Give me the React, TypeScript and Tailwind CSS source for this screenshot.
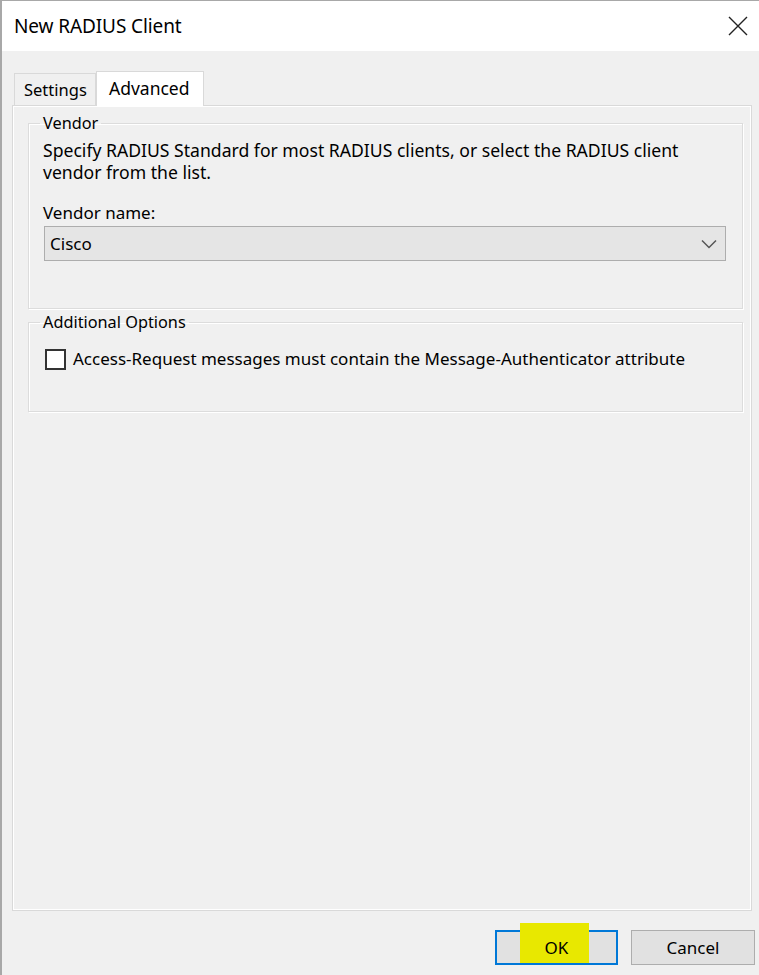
const font = { fontFamily: '"Noto Sans", "Open Sans", sans-serif' };

function GroupBox({ label, className, children }: { label: string; className?: string; children: React.ReactNode }) {
  return (
    <fieldset className="border border-[#dcdcdc] shadow-[inset_1px_1px_0_#ffffff,1px_1px_0_#ffffff]">
      <legend className="ml-[11px] px-[3px] text-[16.3px] leading-[20px] text-black">{label}</legend>
      <div className={className}>{children}</div>
    </fieldset>
  );
}

export default function App() {
  return (
    <div className="w-[759px] h-[975px] bg-[#f0f0f0] border-l-2 border-t border-[#a8a8a8] flex flex-col text-black" style={font}>
      {/* Title bar */}
      <div className="h-[50px] bg-white flex items-center justify-between pl-[12px] pr-[10px]">
        <span className="text-[19px] tracking-[-0.1px]">New RADIUS Client</span>
        <svg width="20" height="20" viewBox="0 0 20 20" className="mr-[1px]">
          <path d="M1 1 L19 19 M19 1 L1 19" stroke="#222" strokeWidth="1.4" fill="none" />
        </svg>
      </div>

      <div className="flex-1 flex flex-col pl-[10px] pr-[7px] pt-[20px]">
        {/* Tabs */}
        <div className="flex items-end pl-[2px] h-[34px] relative z-10">
          <div className="h-[32px] w-[82px] border border-b-0 border-[#d9d9d9] bg-[#f0f0f0] flex items-end pb-[2px] pl-[9px] text-[16.5px]">
            Settings
          </div>
          <div className="h-[35px] w-[108px] border border-b-0 border-[#d9d9d9] bg-white -mb-px flex items-start pt-[3px] pl-[12px] text-[17.5px]">
            Advanced
          </div>
        </div>

        {/* Tab page */}
        <div className="h-[806px] border border-[#d9d9d9] shadow-[inset_1px_1px_0_#ffffff,inset_-1px_-1px_0_#ffffff] pl-[15px] pr-[8px] pt-[7px] flex flex-col gap-[3px]">
          <GroupBox label="Vendor" className="h-[169px] pl-[14px] pr-[16px]">
            <p className="text-[17.6px] leading-[22px] mt-[6px]">
              Specify RADIUS Standard for most RADIUS clients, or select the RADIUS client
              <br />
              vendor from the list.
            </p>
            <div className="mt-[20px] text-[17px] leading-[20px]">Vendor name:</div>
            <div className="mt-[3px] ml-[1px] h-[35px] bg-[#e5e5e5] border border-[#adadad] flex items-center justify-between pl-[5px] pr-[8px]">
              <span className="text-[17px]">Cisco</span>
              <svg width="16" height="10" viewBox="0 0 16 10">
                <path d="M1 1.5 L8 8.5 L15 1.5" stroke="#555" strokeWidth="1.5" fill="none" />
              </svg>
            </div>
          </GroupBox>

          <GroupBox label="Additional Options" className="h-[79px] pl-[16px] pr-[16px]">
            <label className="flex items-center gap-[7px] pt-[15px]">
              <span className="w-[21px] h-[21px] border-2 border-[#333] bg-white" />
              <span className="text-[17px] leading-[24px]">Access-Request messages must contain the Message-Authenticator attribute</span>
            </label>
          </GroupBox>
        </div>

        {/* Buttons */}
        <div className="flex justify-end gap-[13px] mt-[19px] -mr-[3px]">
          <button className="relative w-[123px] h-[35px] border-2 border-[#0078d7] bg-[#e1e1e1] text-[17px]">
            <span className="absolute left-[23px] top-[-9px] w-[69px] h-[40px] bg-[#e8e800]" />
            <span className="relative">OK</span>
          </button>
          <button className="w-[124px] h-[35px] border border-[#adadad] bg-[#e1e1e1] text-[17px]">Cancel</button>
        </div>
      </div>
    </div>
  );
}
